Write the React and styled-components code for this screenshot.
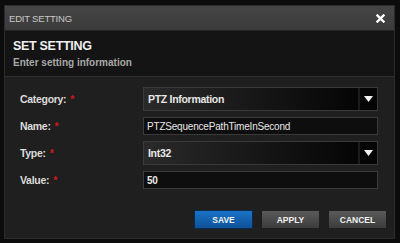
import React from 'react';
import styled, { createGlobalStyle } from 'styled-components';

const GlobalStyle = createGlobalStyle`
    html, body {
        margin: 0;
        padding: 0;
        background: #0c0c0c;
        font-family: "Liberation Sans", Arial, sans-serif;
    }
    * {
        box-sizing: border-box;
    }
`;

const Dialog = styled.div`
    width: 391px;
    margin: 5px 0 0 4px;
    border: 1px solid #2c2c2c;
    background: #1f1f1f;
`;

const TitleBar = styled.div`
    height: 25px;
    display: flex;
    align-items: center;
    justify-content: space-between;
    padding: 0 9px 0 4px;
    background: linear-gradient(#454545, #3b3b3b);
    border-bottom: 1px solid #232323;
    color: #c8c8c8;
    font-size: 9.5px;
    letter-spacing: -0.2px;
`;

const Close = styled.svg`
    width: 9px;
    height: 9px;
    display: block;
`;

const Header = styled.div`
    height: 46px;
    padding: 7px 8px 0;
    background: #141414;
    border-bottom: 1px solid #2e2e2e;
`;

const Heading = styled.h1`
    margin: 0;
    font-size: 12.5px;
    line-height: 16px;
    font-weight: bold;
    color: #f0f0f0;
    letter-spacing: -0.3px;
`;

const SubHeading = styled.div`
    margin-top: 3px;
    font-size: 10px;
    font-weight: bold;
    color: #a8a8a8;
`;

const Body = styled.div`
    padding: 10px 0 9px 15px;
    background: #1f1f1f;
`;

const Form = styled.div`
    display: grid;
    grid-template-columns: 123px 235px;
    row-gap: 6px;
    align-items: center;
`;

const Label = styled.label`
    font-size: 10.5px;
    font-weight: bold;
    color: #dcdcdc;
    letter-spacing: -0.3px;

    span {
        color: #d01818;
        margin-left: 4px;
    }
`;

const SelectBox = styled.div`
    height: 24px;
    display: flex;
    border: 1px solid #3a3a3a;
    background: #0a0a0a;
`;

const SelectValue = styled.div`
    flex: 1;
    display: flex;
    align-items: center;
    padding-left: 4px;
    font-size: 10.5px;
    font-weight: bold;
    color: #e8e8e8;
    letter-spacing: -0.3px;
    background: linear-gradient(to right, #2a2a2a, #050505);
`;

const Arrow = styled.div`
    width: 19px;
    display: flex;
    align-items: center;
    justify-content: center;
    border-left: 2px solid #1c1c1c;
    background: #050505;
`;

const Input = styled.div`
    height: 18px;
    display: flex;
    align-items: center;
    padding-left: 3px;
    border: 1px solid #3a3a3a;
    background: #0e0e0e;
    font-size: 10px;
    font-weight: ${(p) => (p.bold ? 'bold' : 'normal')};
    color: #e8e8e8;
    letter-spacing: -0.2px;
`;

const Buttons = styled.div`
    display: flex;
    justify-content: flex-end;
    gap: 8px;
    margin-top: 21px;
    padding-right: 7px;
`;

const Button = styled.button`
    width: 59px;
    height: 19px;
    padding: 0;
    font-family: inherit;
    font-size: 8.5px;
    font-weight: bold;
    color: #f0f0f0;
    border: 1px solid ${(p) => (p.primary ? '#0b2a4c' : '#1e1e1e')};
    background: ${(p) =>
        p.primary
            ? 'linear-gradient(#1b73c6, #0d5199)'
            : 'linear-gradient(#5a5a5a, #3c3c3c)'};
    cursor: pointer;
`;

const Triangle = () => (
    <svg width="9" height="6" viewBox="0 0 9 6">
        <polygon points="0,0 9,0 4.5,6" fill="#f2f2f2" />
    </svg>
);

const Select = ({ value }) => (
    <SelectBox>
        <SelectValue>{value}</SelectValue>
        <Arrow>
            <Triangle />
        </Arrow>
    </SelectBox>
);

const App = () => {
    return (
        <>
            <GlobalStyle />
            <Dialog>
                <TitleBar>
                    EDIT SETTING
                    <Close viewBox="0 0 9 9">
                        <path d="M1.5 1.5 L7.5 7.5 M7.5 1.5 L1.5 7.5" stroke="#fff" strokeWidth="2.4" strokeLinecap="square" />
                    </Close>
                </TitleBar>
                <Header>
                    <Heading>SET SETTING</Heading>
                    <SubHeading>Enter setting information</SubHeading>
                </Header>
                <Body>
                    <Form>
                        <Label>
                            Category:<span>*</span>
                        </Label>
                        <Select value="PTZ Information" />
                        <Label>
                            Name:<span>*</span>
                        </Label>
                        <Input>PTZSequencePathTimeInSecond</Input>
                        <Label>
                            Type:<span>*</span>
                        </Label>
                        <Select value="Int32" />
                        <Label>
                            Value:<span>*</span>
                        </Label>
                        <Input bold>50</Input>
                    </Form>
                    <Buttons>
                        <Button primary>SAVE</Button>
                        <Button>APPLY</Button>
                        <Button>CANCEL</Button>
                    </Buttons>
                </Body>
            </Dialog>
        </>
    );
};

export default App;
